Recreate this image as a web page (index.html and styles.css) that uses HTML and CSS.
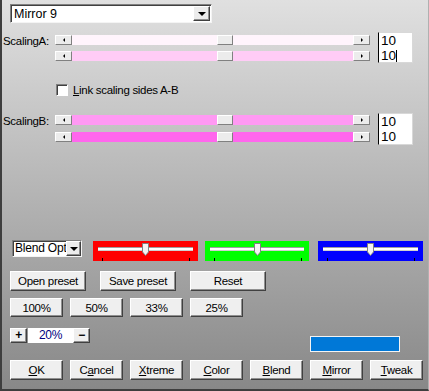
FILE: index.html
```html
<!doctype html>
<html>
<head>
    <meta charset="utf-8">
    <title>Mirror</title>
    <link rel="stylesheet" href="styles.css">
</head>
<body>
<div class="dlg">

    <div class="row-top">
        <div class="combo combo-main">
            <span class="combo-text">Mirror 9</span>
            <span class="combo-btn"><i class="tri-down"></i></span>
        </div>
    </div>

    <div class="scale-group group-a">
        <div class="scale-label">ScalingA:</div>
        <div class="sliders">
            <div class="hslider">
                <span class="arrow-btn"><i class="tri-left"></i></span>
                <div class="track t-a1"><span class="thumb"></span></div>
                <span class="arrow-btn"><i class="tri-right"></i></span>
            </div>
            <div class="hslider">
                <span class="arrow-btn"><i class="tri-left"></i></span>
                <div class="track t-a2"><span class="thumb"></span></div>
                <span class="arrow-btn"><i class="tri-right"></i></span>
            </div>
        </div>
        <div class="numbox">
            <div>10</div>
            <div>10<span class="caret"></span></div>
        </div>
    </div>

    <div class="check-row">
        <span class="checkbox"></span>
        <span class="check-label"><u>L</u>ink scaling sides A-B</span>
    </div>

    <div class="scale-group group-b">
        <div class="scale-label">ScalingB:</div>
        <div class="sliders">
            <div class="hslider">
                <span class="arrow-btn"><i class="tri-left"></i></span>
                <div class="track t-b1"><span class="thumb"></span></div>
                <span class="arrow-btn"><i class="tri-right"></i></span>
            </div>
            <div class="hslider">
                <span class="arrow-btn"><i class="tri-left"></i></span>
                <div class="track t-b2"><span class="thumb"></span></div>
                <span class="arrow-btn"><i class="tri-right"></i></span>
            </div>
        </div>
        <div class="numbox">
            <div>10</div>
            <div>10</div>
        </div>
    </div>

    <div class="blend-row">
        <div class="combo combo-blend">
            <span class="combo-text">Blend Optic</span>
            <span class="combo-btn"><i class="tri-down"></i></span>
        </div>
        <div class="color-panel red">
            <span class="ctrack"></span>
            <svg class="cthumb" width="7" height="13" viewBox="0 0 7 13"><path d="M0.5 0.5H6.5V9L3.5 12.5L0.5 9Z" fill="#f4f4f4" stroke="#808080"/></svg>
            <span class="tick tick-l"></span><span class="tick tick-r"></span>
        </div>
        <div class="color-panel green">
            <span class="ctrack"></span>
            <svg class="cthumb" width="7" height="13" viewBox="0 0 7 13"><path d="M0.5 0.5H6.5V9L3.5 12.5L0.5 9Z" fill="#f4f4f4" stroke="#808080"/></svg>
            <span class="tick tick-l"></span><span class="tick tick-r"></span>
        </div>
        <div class="color-panel blue">
            <span class="ctrack"></span>
            <svg class="cthumb" width="7" height="13" viewBox="0 0 7 13"><path d="M0.5 0.5H6.5V9L3.5 12.5L0.5 9Z" fill="#f4f4f4" stroke="#808080"/></svg>
            <span class="tick tick-l"></span><span class="tick tick-r"></span>
        </div>
    </div>

    <div class="btn-row preset-row">
        <button class="btn wide">Open preset</button>
        <button class="btn wide">Save preset</button>
        <button class="btn wide">Reset</button>
    </div>

    <div class="btn-row pct-row">
        <button class="btn">100%</button>
        <button class="btn">50%</button>
        <button class="btn">33%</button>
        <button class="btn">25%</button>
    </div>

    <div class="zoom-row">
        <button class="btn small">+</button>
        <span class="zoom-field">20%</span>
        <button class="btn small">&minus;</button>
        <span class="swatch"></span>
    </div>

    <div class="btn-row bottom-row">
        <button class="btn"><u>O</u>K</button>
        <button class="btn">C<u>a</u>ncel</button>
        <button class="btn"><u>X</u>treme</button>
        <button class="btn"><u>C</u>olor</button>
        <button class="btn"><u>B</u>lend</button>
        <button class="btn"><u>M</u>irror</button>
        <button class="btn"><u>T</u>weak</button>
    </div>

</div>
</body>
</html>
```

FILE: styles.css
```css
body {
    margin: 0;
    font-family: 'Liberation Sans', Arial, sans-serif;
    font-size: 11.5px;
    letter-spacing: -0.3px;
    color: #000;
}
.dlg {
    width: 429px;
    height: 391px;
    box-sizing: border-box;
    border-left: 2px solid #3e3e3e;
    border-bottom: 2px solid #3e3e3e;
    border-right: 1px solid #b0b0b0;
    background: linear-gradient(#e0e0e0, #888888);
    display: flex;
    flex-direction: column;
    overflow: hidden;
}

/* combo boxes */
.combo {
    display: flex;
    box-sizing: border-box;
    background: #fff;
    border: 1px solid;
    border-color: #808080 #f4f4f4 #f4f4f4 #808080;
    box-shadow: inset 1px 1px 0 #404040;
}
.combo-text {
    flex: 1;
    overflow: hidden;
    white-space: nowrap;
}
.combo-btn {
    display: flex;
    align-items: center;
    justify-content: center;
    background: #ececec;
    box-sizing: border-box;
    border: 1px solid;
    border-color: #fff #404040 #404040 #fff;
    box-shadow: inset -1px -1px 0 #909090;
}
.tri-down {
    border-top: 4px solid #000;
    border-left: 4px solid transparent;
    border-right: 4px solid transparent;
    margin-top: 1px;
}
.row-top {
    margin: 4px 0 0 8px;
}
.combo-main {
    width: 202px;
    height: 19px;
    font-size: 12.5px;
    letter-spacing: 0;
}
.combo-main .combo-text {
    padding: 1px 0 0 3px;
    line-height: 16px;
}
.combo-main .combo-btn {
    width: 17px;
    margin: 1px 1px 1px 0;
}

/* scaling sliders */
.scale-group {
    display: flex;
    align-items: flex-start;
}
.group-a {
    margin-top: 9px;
}
.group-b {
    margin-top: 17px;
}
.scale-label {
    width: 52px;
    margin-left: 1px;
    line-height: 13px;
}
.group-a .scale-label {
    margin-top: 3px;
}
.group-b .scale-label {
    margin-top: 2px;
}
.sliders {
    width: 315px;
    display: flex;
    flex-direction: column;
}
.group-a .sliders {
    margin-top: 3px;
    gap: 6px;
}
.group-b .sliders {
    margin-top: 2px;
    gap: 7px;
}
.hslider {
    display: flex;
    height: 10px;
}
.arrow-btn {
    width: 17px;
    height: 10px;
    box-sizing: border-box;
    background: #ececec;
    border: 1px solid;
    border-color: #fff #808080 #808080 #fff;
    display: flex;
    align-items: center;
    justify-content: center;
}
.tri-left {
    border-right: 2px solid #000;
    border-top: 2px solid transparent;
    border-bottom: 2px solid transparent;
}
.tri-right {
    border-left: 2px solid #000;
    border-top: 2px solid transparent;
    border-bottom: 2px solid transparent;
}
.track {
    flex: 1;
    position: relative;
}
.t-a1 { background: #fff4fc; }
.t-a2 { background: #ffccf6; }
.t-b1 { background: #ff99f3; }
.t-b2 { background: #ff66ed; }
.thumb {
    position: absolute;
    left: 145px;
    top: 0;
    width: 16px;
    height: 10px;
    box-sizing: border-box;
    background: #ececec;
    border: 1px solid;
    border-color: #fff #808080 #808080 #fff;
}
.numbox {
    width: 35px;
    margin-left: 8px;
    box-sizing: border-box;
    background: #fff;
    border: 1px solid #d8d8d8;
    border-left-color: #000;
    font-size: 13.5px;
    letter-spacing: 0;
    line-height: 15px;
    padding-left: 2px;
}
.group-a .numbox {
    height: 31px;
}
.group-b .numbox {
    height: 32px;
}
.caret {
    display: inline-block;
    width: 1px;
    height: 12px;
    background: #000;
    vertical-align: -2px;
}

/* checkbox */
.check-row {
    display: flex;
    align-items: center;
    margin: 21px 0 0 54px;
    height: 12px;
}
.checkbox {
    width: 12px;
    height: 12px;
    box-sizing: border-box;
    background: #fff;
    border: 1px solid;
    border-color: #808080 #fff #fff #808080;
    box-shadow: inset 1px 1px 0 #404040;
}
.check-label {
    margin-left: 5px;
    line-height: 13px;
}

/* blend / color sliders */
.blend-row {
    display: flex;
    align-items: flex-start;
    margin: 95px 0 0 10px;
}
.combo-blend {
    width: 70px;
    height: 17px;
    font-size: 12px;
    letter-spacing: -0.2px;
}
.combo-blend .combo-text {
    padding-left: 2px;
    line-height: 15px;
}
.combo-blend .combo-btn {
    width: 15px;
    margin: 0;
}
.color-panel {
    position: relative;
    height: 20px;
    margin-top: 1px;
}
.red {
    background: #ff0000;
    width: 105px;
    margin-left: 11px;
}
.green {
    background: #00ff00;
    width: 104px;
    margin-left: 7px;
}
.blue {
    background: #0000ff;
    width: 105px;
    margin-left: 9px;
}
.ctrack {
    position: absolute;
    left: 5px;
    right: 5px;
    top: 6px;
    height: 2px;
    background: #fff;
    border-top: 1px solid #a0a0a0;
    border-bottom: 1px solid #d0d0d0;
}
.cthumb {
    position: absolute;
    left: 49px;
    top: 2px;
}
.tick {
    position: absolute;
    bottom: 0;
    width: 1px;
    height: 3px;
    background: #000;
}
.tick-l { left: 9px; }
.tick-r { left: 96px; }

/* buttons */
.btn-row {
    display: flex;
    margin-left: 8px;
}
.btn {
    box-sizing: border-box;
    width: 53px;
    height: 20px;
    padding: 0;
    font-family: inherit;
    font-size: 11.5px;
    letter-spacing: -0.3px;
    color: #000;
    background: #efefef;
    border: 1px solid;
    border-color: #fff #404040 #404040 #fff;
    box-shadow: inset -1px -1px 0 #909090;
}
.preset-row {
    margin-top: 10px;
    gap: 14px;
}
.btn.wide {
    width: 76px;
}
.pct-row {
    margin-top: 7px;
    gap: 7px;
}
.pct-row .btn {
    height: 19px;
}
.zoom-row {
    display: flex;
    align-items: flex-start;
    margin: 11px 0 0 8px;
}
.btn.small {
    width: 17px;
    height: 15px;
    font-size: 12px;
    font-weight: bold;
    line-height: 11px;
}
.zoom-field {
    width: 45px;
    height: 15px;
    margin-left: 1px;
    background: #fff;
    color: #000080;
    text-align: center;
    line-height: 14px;
    font-size: 12px;
}
.swatch {
    width: 90px;
    height: 16px;
    box-sizing: border-box;
    margin: 8px 0 0 220px;
    background: #0078d7;
    border: 1px solid #f4f4f4;
}
.bottom-row {
    margin-top: 8px;
    gap: 7px;
}
```
